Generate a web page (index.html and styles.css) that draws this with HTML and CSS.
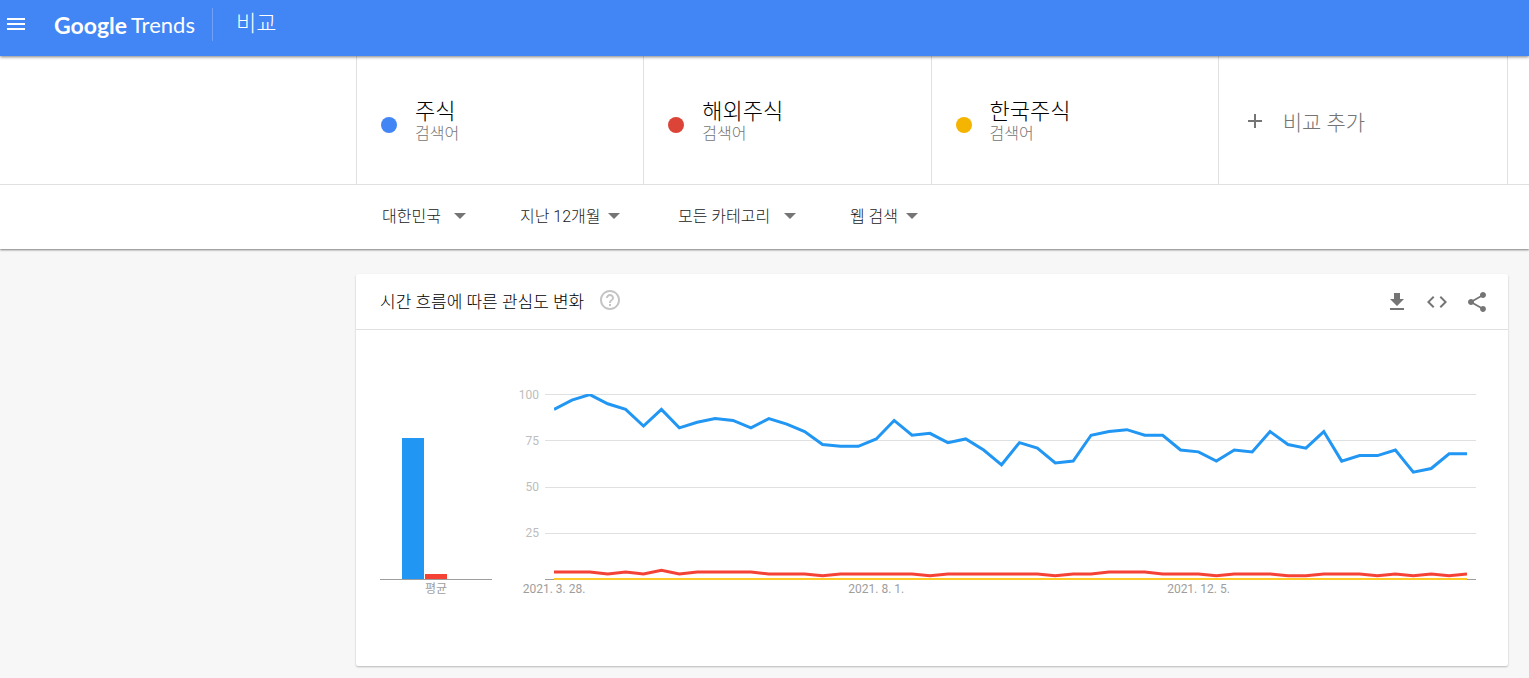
FILE: index.html
```html
<!DOCTYPE html>
<html lang="ko">
<head>
  <meta charset="UTF-8" />
  <meta name="viewport" content="width=device-width, initial-scale=1.0"/>
  <title>비교 - Google Trends</title>
  <link rel="stylesheet" href="styles.css">
</head>
<body>
  <header class="topbar">
    <button type="button" class="icon-btn menu-btn" aria-label="메뉴">
      <svg viewBox="0 0 24 24"><path d="M3 18h18v-2H3v2zm0-5h18v-2H3v2zm0-7v2h18V6H3z"/></svg>
    </button>
    <a href="#" class="logo"><span class="logo-google">Google</span><span class="logo-trends">Trends</span></a>
    <h1>비교</h1>
  </header>

  <div class="explore">
    <!-- Search terms -->
    <div class="terms-bar">
      <div class="terms">
        <div class="term">
          <span class="dot blue"></span>
          <div class="term-text">
            <p class="term-name">주식</p>
            <p class="term-type">검색어</p>
          </div>
        </div>
        <div class="term">
          <span class="dot red"></span>
          <div class="term-text">
            <p class="term-name">해외주식</p>
            <p class="term-type">검색어</p>
          </div>
        </div>
        <div class="term">
          <span class="dot yellow"></span>
          <div class="term-text">
            <p class="term-name">한국주식</p>
            <p class="term-type">검색어</p>
          </div>
        </div>
        <button type="button" class="term add-term">
          <svg viewBox="0 0 24 24"><path d="M19 13h-6v6h-2v-6H5v-2h6V5h2v6h6v2z"/></svg>
          <span>비교 추가</span>
        </button>
      </div>
    </div>

    <!-- Filters -->
    <form class="filters">
      <label class="filter picker">
        <select name="geo" aria-label="지역"><option>대한민국</option></select>
      </label>
      <label class="filter">
        <select name="date" aria-label="기간"><option>지난 12개월</option></select>
      </label>
      <label class="filter picker">
        <select name="cat" aria-label="카테고리"><option>모든 카테고리</option></select>
      </label>
      <label class="filter">
        <select name="gprop" aria-label="검색 유형"><option>웹 검색</option></select>
      </label>
    </form>
  </div>

  <main>
    <section class="card">
      <div class="card-header">
        <h2>시간 흐름에 따른 관심도 변화</h2>
        <button type="button" class="icon-btn help-btn" aria-label="도움말">
          <svg viewBox="0 0 24 24"><path d="M11 18h2v-2h-2v2zm1-16C6.48 2 2 6.48 2 12s4.48 10 10 10 10-4.480 10-10S17.520 2 12 2zm0 18c-4.410 0-8-3.590-8-8s3.590-8 8-8 8 3.590 8 8-3.590 8-8 8zm0-14c-2.210 0-4 1.790-4 4h2c0-1.100.9-2 2-2s2 .9 2 2c0 2-3 1.750-3 5h2c0-2.250 3-2.500 3-5 0-2.210-1.790-4-4-4z"/></svg>
        </button>
        <div class="actions">
          <button type="button" class="icon-btn" aria-label="다운로드">
            <svg viewBox="0 0 24 24"><path d="M19 9h-4V3H9v6H5l7 7 7-7zM5 18v2h14v-2H5z"/></svg>
          </button>
          <button type="button" class="icon-btn" aria-label="퍼가기">
            <svg viewBox="0 0 24 24"><path d="M9.400 16.600L4.800 12l4.600-4.600L8 6l-6 6 6 6 1.400-1.400zm5.200 0l4.600-4.600-4.600-4.600L16 6l6 6-6 6-1.400-1.400z"/></svg>
          </button>
          <button type="button" class="icon-btn" aria-label="공유">
            <svg viewBox="0 0 24 24"><path d="M18 16.080c-.76 0-1.440.3-1.960.77L8.910 12.700c.05-.23.09-.46.09-.7s-.04-.47-.09-.7l7.050-4.110c.54.5 1.250.81 2.040.81 1.660 0 3-1.340 3-3s-1.340-3-3-3-3 1.340-3 3c0 .24.04.47.09.7L8.040 9.810C7.500 9.310 6.790 9 6 9c-1.660 0-3 1.340-3 3s1.340 3 3 3c.79 0 1.500-.31 2.040-.81l7.120 4.160c-.05.21-.08.43-.08.65 0 1.610 1.310 2.920 2.920 2.920s2.920-1.310 2.920-2.920-1.310-2.920-2.920-2.920z"/></svg>
          </button>
        </div>
      </div>

      <div class="card-body">
        <div class="average">
          <div class="bars">
            <div class="bar bar-blue" style="height: 76%"></div>
            <div class="bar bar-red" style="height: 2.8%"></div>
            <div class="bar bar-yellow" style="height: 0%"></div>
          </div>
          <p class="axis-label">평균</p>
        </div>

        <div class="timeline">
          <div class="plot">
            <div class="ticks">
              <div class="tick"><span>100</span></div>
              <div class="tick"><span>75</span></div>
              <div class="tick"><span>50</span></div>
              <div class="tick"><span>25</span></div>
              <div class="tick base"><span></span></div>
            </div>
            <!-- x = week, y = 100 - interest -->
            <svg class="lines" viewBox="0 -0.3 51 100.6" preserveAspectRatio="none">
              <polyline class="line-blue" points="0,8 1,3 2,0 3,5 4,8 5,17 6,8 7,18 8,15 9,13 10,14 11,18 12,13 13,16 14,20 15,27 16,28 17,28 18,24 19,14 20,22 21,21 22,26 23,24 24,30 25,38 26,26 27,29 28,37 29,36 30,22 31,20 32,19 33,22 34,22 35,30 36,31 37,36 38,30 39,31 40,20 41,27 42,29 43,20 44,36 45,33 46,33 47,30 48,42 49,40 50,32 51,32"/>
              <polyline class="line-red" points="0,96 1,96 2,96 3,97 4,96 5,97 6,95 7,97 8,96 9,96 10,96 11,96 12,97 13,97 14,97 15,98 16,97 17,97 18,97 19,97 20,97 21,98 22,97 23,97 24,97 25,97 26,97 27,97 28,98 29,97 30,97 31,96 32,96 33,96 34,97 35,97 36,97 37,98 38,97 39,97 40,97 41,98 42,98 43,97 44,97 45,97 46,98 47,97 48,98 49,97 50,98 51,97"/>
              <polyline class="line-yellow" points="0,100 51,100"/>
            </svg>
          </div>
          <div class="dates">
            <span class="axis-label">2021. 3. 28.</span>
            <span class="axis-label">2021. 8. 1.</span>
            <span class="axis-label">2021. 12. 5.</span>
          </div>
        </div>
      </div>
    </section>
  </main>
</body>
</html>
```
FILE: styles.css
```css
* {
  box-sizing: border-box;
  margin: 0;
  padding: 0;
}

body {
  font-family: Roboto, 'Noto Sans CJK KR', sans-serif;
  font-weight: 300;
  background: #f7f7f7;
  color: #212121;
}

button, select {
  font: inherit;
  color: inherit;
  background: none;
  border: none;
  cursor: pointer;
}

svg {
  display: block;
}

.icon-btn {
  width: 24px;
  height: 24px;
}

.icon-btn svg, .add-term svg {
  width: 24px;
  height: 24px;
  fill: currentColor;
}

/* Top bar */
.topbar {
  position: relative;
  z-index: 1;
  display: flex;
  align-items: center;
  height: 56px;
  padding: 0 4px 8px;
  background: #4285f4;
  color: #fff;
  box-shadow: 0 1px 3px rgba(0, 0, 0, 0.5);
}

.logo {
  display: flex;
  gap: 4px;
  height: 33px;
  margin-left: 26px;
  padding-right: 17px;
  border-right: 1px solid #6ea1f7;
  font-family: Lato, sans-serif;
  line-height: 34px;
  color: #fff;
  text-decoration: none;
}

.logo-google {
  font-size: 23px;
  font-weight: 700;
}

.logo-trends {
  font-size: 22px;
  font-weight: 400;
}

.topbar h1 {
  margin-left: 23px;
  padding-bottom: 6px;
  font-size: 22px;
  font-weight: 300;
}

/* Search terms */
.explore {
  background: #fff;
  box-shadow: 0 1px 2px rgba(0, 0, 0, 0.5);
}

.terms-bar {
  padding: 0 21px 0 356px;
  border-bottom: 1px solid #e0e0e0;
}

.terms {
  display: grid;
  grid-template-columns: repeat(4, 1fr);
  height: 128px;
  padding-right: 2px;
  border-right: 1px solid #e0e0e0;
}

.term {
  display: flex;
  align-items: center;
  gap: 18px;
  padding-left: 24px;
  border-left: 1px solid #e0e0e0;
}

.dot {
  width: 16px;
  height: 16px;
  margin-top: 10px;
  border-radius: 50%;
}

.dot.blue {
  background: #4285f4;
}

.dot.red {
  background: #db4437;
}

.dot.yellow {
  background: #f4b400;
}

.term-text {
  padding-top: 4px;
}

.term-name {
  font-size: 22px;
  line-height: 24px;
  color: #000;
}

.term-type {
  font-size: 16px;
  line-height: 20px;
  color: #757575;
}

.add-term {
  gap: 16px;
  padding-top: 2px;
  font-size: 21px;
  color: #757575;
}

/* Filters */
.filters {
  display: grid;
  grid-template-columns: 138px 158px 172px auto;
  align-items: center;
  height: 64px;
  padding: 0 0 2px 382px;
}

.filter {
  display: flex;
  align-items: center;
}

.filter select {
  appearance: none;
  padding-right: 7px;
  font-size: 16px;
}

.filter.picker select {
  padding-right: 13px;
}

.filter::after {
  content: "";
  border: 6px solid transparent;
  border-top-color: #757575;
  border-bottom: none;
}

/* Card */
main {
  padding: 25px 21px 12px 356px;
}

.card {
  background: #fff;
  border-radius: 2px;
  box-shadow: 0 1px 2px rgba(0, 0, 0, 0.25);
}

.card-header {
  display: flex;
  align-items: center;
  height: 56px;
  padding: 0 19px 0 24px;
  border-bottom: 1px solid #e0e0e0;
}

.card-header h2 {
  padding-bottom: 3px;
  font-size: 17px;
  font-weight: 300;
  color: #000;
}

.help-btn {
  margin: 0 0 3px 14px;
  color: #c4c4c4;
}

.actions {
  display: flex;
  gap: 16px;
  margin-left: auto;
  color: #757575;
}

.card-body {
  display: flex;
  gap: 20px;
  padding: 57px 32px 67px 24px;
}

.axis-label {
  font-size: 12px;
  font-weight: 400;
  line-height: 19px;
  text-align: center;
  white-space: nowrap;
  color: #9e9e9e;
}

.average {
  width: 112px;
  padding-top: 7px;
}

.bars {
  display: flex;
  align-items: flex-end;
  justify-content: center;
  gap: 1px;
  height: 186px;
  border-bottom: 1px solid #9e9e9e;
}

.bar {
  width: 22px;
}

.bar-blue {
  background: #2196f3;
}

.bar-red {
  background: #f44336;
}

.bar-yellow {
  background: #ffca28;
}

.timeline {
  flex: 1;
}

.plot {
  display: grid;
}

.ticks, .lines {
  grid-area: 1 / 1;
}

.ticks {
  display: flex;
  flex-direction: column;
  justify-content: space-between;
  height: 200px;
}

.tick {
  display: flex;
  align-items: center;
  gap: 6px;
  height: 15px;
  font-size: 12px;
  font-weight: 400;
  color: #bdbdbd;
}

.tick span {
  width: 27px;
  text-align: right;
}

.tick::after {
  content: "";
  flex: 1;
  height: 1px;
  background: #e0e0e0;
}

.tick.base::after {
  background: #9e9e9e;
}

.lines {
  width: calc(100% - 51px);
  height: 186px;
  margin: 7px 9px 7px 42px;
}

.lines polyline {
  fill: none;
  stroke-width: 3px;
  vector-effect: non-scaling-stroke;
}

.line-blue {
  stroke: #2196f3;
}

.line-red {
  stroke: #f44336;
}

.line-yellow {
  stroke: #ffca28;
}

.dates {
  display: grid;
  grid-template-columns: 18fr 18fr 15fr;
  margin: -7px 9px 0 42px;
}

.dates .axis-label {
  width: 64px;
  margin-left: -32px;
}
```
